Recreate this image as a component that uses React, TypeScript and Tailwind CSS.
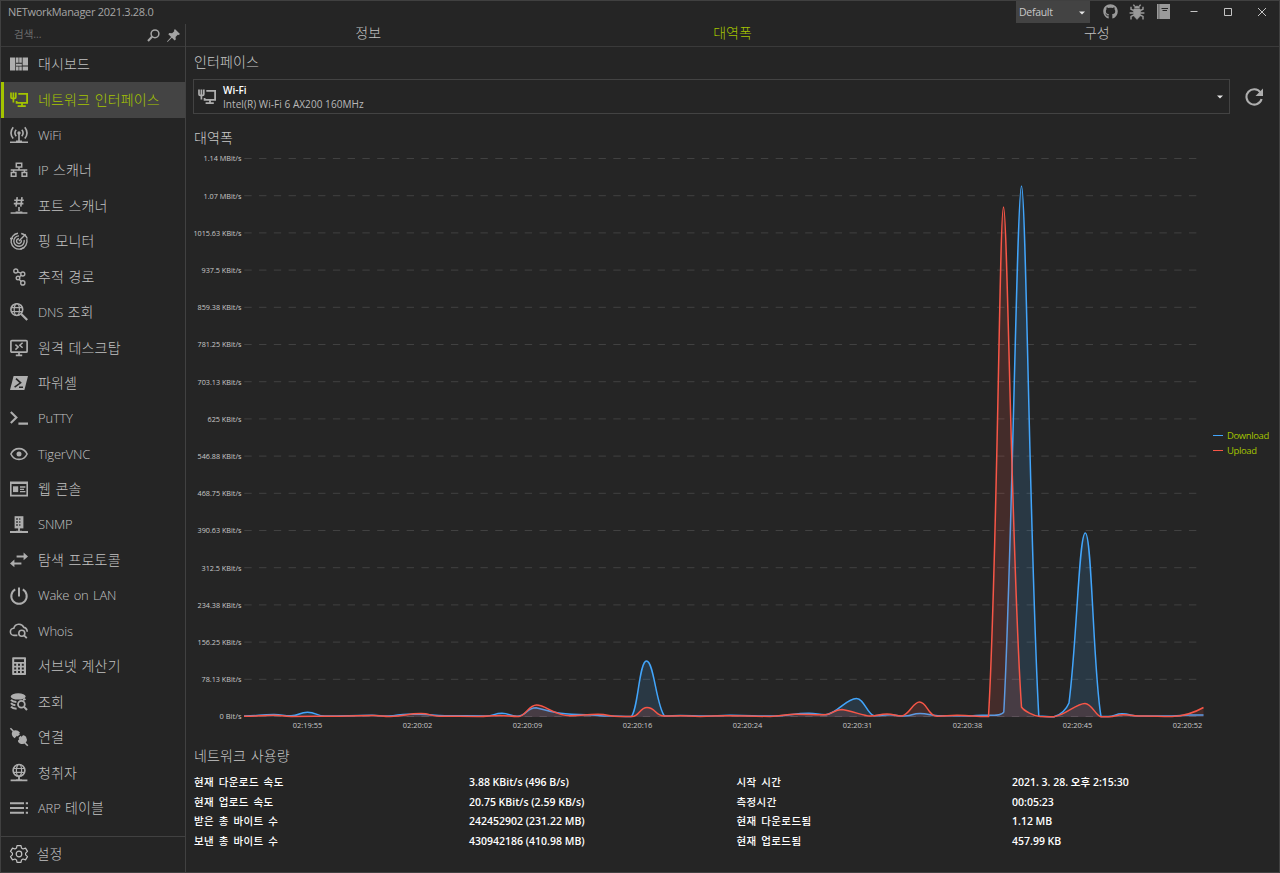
import type { ReactNode } from 'react';
import clsx from 'clsx';
import { FaGithub } from 'react-icons/fa';

const ICONS: Record<string, ReactNode> = {
  dashboard: (
    <g fill="currentColor" stroke="none">
      <path d="M0 2.5h5.3v13H0zM6 2.5h2.6v5.2H6zM9.2 2.5h2.6v5.2H9.2zM12.6 2.5H18v8h-5.4zM6 8.7h5.8v2H6zM6 11.5h2.6v4H6zM9.2 11.5h2.6v4H9.2zM12.6 11.5H18v4h-5.4z" />
    </g>
  ),
  network: (
    <>
      <path d="M8.3 2.9h8.8v8.9H6.6V10M12 12v2.6M7.6 15.2h8.2" strokeWidth="1.8" />
      <path d="M1 1.6v4.6q0 1.2 1.2 1.2h2.4q1.2 0 1.2-1.2V1.6M3.4 1.4v10" strokeWidth="1.7" />
    </>
  ),
  wifi: (
    <>
      <circle cx="9" cy="7" r="1.7" fill="currentColor" stroke="none" />
      <path d="M6.2 3.8q-2.6 3.1 0 6.4M11.8 3.8q2.6 3.1 0 6.4M3.2 1.2q-4.4 5.7 0 11.4M14.8 1.2q4.4 5.7 0 11.4M9 8v7M0 16.2h18M6 15.2h6" strokeWidth="1.6" />
    </>
  ),
  lan: (
    <path d="M6.3 2.3h5.4v3.6H6.3zM1.3 11.6h4.6v3.6H1.3zM12.1 11.6h4.6v3.6h-4.6zM9 6v3M0.7 9h16.6M3.6 9v2.6M14.4 9v2.6" strokeWidth="1.5" />
  ),
  port: (
    <path d="M7.2 0.2L6 9.6M12 0.2l-1.2 9.4M4.2 3.2h9.6M3.8 6.6h9.6M9 10v4M0.6 16h16.8M5.6 15.2h6.8" strokeWidth="1.6" />
  ),
  radar: (
    <>
      <path d="M8 1.2A8 8 0 1 0 16.8 7.2M9 3.9a5.2 5.2 0 1 0 5.1 4.1M9 6.7a2.4 2.4 0 1 0 2.2 1.6M9 9L15.6 2.2" strokeWidth="1.4" />
      <path d="M11.2 1.4Q16 2.6 17.2 6.6M0 6.5h3M10.5 17.3l4-2" strokeWidth="1.5" />
    </>
  ),
  route: (
    <>
      <circle cx="5.8" cy="3" r="2" />
      <circle cx="12.8" cy="6" r="2" />
      <circle cx="8" cy="10" r="1.8" />
      <circle cx="12.8" cy="14.9" r="2.1" />
      <path d="M7.6 3.8l3.4 1.4M11.4 7.3L9.4 8.9M9.2 11.4l2.2 2" />
    </>
  ),
  dns: (
    <>
      <circle cx="6.8" cy="6.6" r="5.9" strokeWidth="1.6" />
      <ellipse cx="6.8" cy="6.6" rx="2.6" ry="5.9" strokeWidth="1.2" />
      <path d="M1.6 4.6h10.4M1.6 8.6h10.4" strokeWidth="1.2" />
      <path d="M11.2 11l6 6" strokeWidth="2.2" />
    </>
  ),
  remote: (
    <>
      <rect x="0.9" y="1.6" width="16.2" height="11.6" rx="1" strokeWidth="1.7" />
      <path d="M9 13.5v2.8M5.8 16.3h6.4" strokeWidth="1.7" />
      <path d="M5.4 5.6l2.8 2.4-2.8 2.6M12.6 3.8L9.8 6.3l2.8 2.5" strokeWidth="1.5" />
    </>
  ),
  powershell: (
    <>
      <path d="M3.6 2H18l-3.6 14H0z" fill="currentColor" stroke="none" />
      <path d="M6 4.6l4.6 4.2-6 4.4M9 13.2h4" stroke="#252525" strokeWidth="1.6" />
    </>
  ),
  putty: <path d="M0.8 3l5.6 5.5L0.8 14M8.4 14.6H18" strokeWidth="2.1" />,
  eye: (
    <>
      <path d="M0.9 9Q3.4 3.6 9 3.6T17.1 9Q14.6 14.4 9 14.4T0.9 9z" strokeWidth="1.6" />
      <circle cx="9" cy="9" r="2.5" fill="currentColor" stroke="none" />
    </>
  ),
  console: (
    <>
      <path d="M0.8 2.4h16.4v13.2H0.8zM0.8 3.3h16.4" strokeWidth="1.6" />
      <path d="M3 6.3h5.2v5.8H3z" fill="currentColor" stroke="none" />
      <path d="M10 7h5.4M10 9.3h4M10 11.6h5.4" strokeWidth="1.3" />
    </>
  ),
  snmp: (
    <>
      <path d="M4.6 0.2h8.8v12.2H4.6z" fill="currentColor" stroke="none" />
      <path d="M6.2 3h1.6M9.2 3h1.2M6.2 6h1.6M9.2 6h1.2M6.2 9h1.6M9.2 9h1.2" stroke="#252525" strokeWidth="1.4" />
      <path d="M9 12v3M0 16h18M6 15.6h6" strokeWidth="1.8" />
    </>
  ),
  arrows: (
    <g fill="currentColor" stroke="none">
      <path d="M6.6 4.4h7V1.6L18 5.4l-4.4 3.8V6.4h-7zM11.4 11.4h-7V8.6L0 12.4l4.4 3.8v-2.8h7z" />
    </g>
  ),
  power: <path d="M9 0.4v9.2M5.2 2.4A7.7 7.7 0 1 0 12.8 2.4" strokeWidth="2" />,
  whois: (
    <>
      <path d="M7.4 13.4H4.2A3.6 3.6 0 0 1 3.8 6.2A5.3 5.3 0 0 1 13.8 5.4Q17.2 6 17.2 9.8" strokeWidth="1.6" />
      <circle cx="11.8" cy="11.2" r="3" strokeWidth="1.6" />
      <path d="M14 13.4l2.8 2.8" strokeWidth="1.8" />
    </>
  ),
  calc: (
    <>
      <rect x="2.2" y="0.2" width="13.8" height="17.8" rx="0.8" fill="currentColor" stroke="none" />
      <path d="M4.2 2.2h9.8v2.8H4.2zM4.2 6.8h2v2h-2zM8 6.8h2v2H8zM11.8 6.8h2v2h-2zM4.2 10.4h2v2h-2zM8 10.4h2v2H8zM11.8 10.4h2v2h-2zM4.2 14h2v2h-2zM8 14h2v2H8zM11.8 14h2v2h-2z" fill="#252525" stroke="none" />
    </>
  ),
  lookup: (
    <>
      <ellipse cx="8.2" cy="3.4" rx="7.4" ry="3.2" fill="currentColor" stroke="none" />
      <path d="M1 6.8q1.6 2 5.4 2.1M1 10.2q1.4 1.8 4.4 2.1M1 13.6q1.6 2 5.6 2.2M13 7q1.6-.4 2.4-1.2" strokeWidth="2" />
      <circle cx="11.4" cy="11.2" r="3.4" strokeWidth="1.8" />
      <path d="M13.8 13.6l3.2 3.4" strokeWidth="2" />
    </>
  ),
  plug: (
    <>
      <path d="M2.4 3.4Q6.4.6 10 4.6L4.6 10.2Q.4 7.2 2.4 3.4zM8 12.4l5-5.2q1.6-.4 3 1.6 1.8 2.8 0 5.6-2.6 2.6-6.2 1Q7.4 13.8 8 12.4z" fill="currentColor" stroke="none" />
      <path d="M0.4 0.2l3 3M15 15l2.8 2.8M7 7.8l2.4-2.2M9 10.6l2.2-2.2" strokeWidth="1.6" />
    </>
  ),
  listener: (
    <>
      <circle cx="9" cy="6.4" r="5.9" strokeWidth="1.6" />
      <ellipse cx="9" cy="6.4" rx="2.6" ry="5.9" strokeWidth="1.2" />
      <path d="M3.6 4.5h10.8M3.6 8.4h10.8" strokeWidth="1.2" />
      <path d="M9 12.4v3M0.6 16.3h16.8M6 16.2h6" strokeWidth="1.8" />
    </>
  ),
  arp: <path d="M0 4.2h14M0 9h14M0 13.8h14M15.8 4.2H18M15.8 9H18M15.8 13.8H18" strokeWidth="1.9" />,
  settings: (
    <>
      <path d="M7 .6h4l.5 2.5 1.5.9 2.5-.9 2 3.3-1.9 1.7v1.8l1.9 1.7-2 3.3-2.5-.9-1.5.9-.5 2.5H7l-.5-2.5-1.5-.9-2.5.9-2-3.3 1.9-1.7V8.1L.5 6.4l2-3.3 2.5.9 1.5-.9z" strokeWidth="1.2" strokeLinejoin="round" />
      <circle cx="9" cy="9" r="2.8" strokeWidth="1.2" />
    </>
  ),
};

function Icon({ name, className }: { name: string; className?: string }) {
  return (
    <svg viewBox="0 0 18 18" className={clsx('h-[18px] w-[18px] shrink-0 overflow-visible', className)} fill="none" stroke="currentColor" strokeWidth="1.4" aria-hidden>
      {ICONS[name]}
    </svg>
  );
}

const NAV = [
  { icon: 'dashboard', label: '대시보드' },
  { icon: 'network', label: '네트워크 인터페이스' },
  { icon: 'wifi', label: 'WiFi' },
  { icon: 'lan', label: 'IP 스캐너' },
  { icon: 'port', label: '포트 스캐너' },
  { icon: 'radar', label: '핑 모니터' },
  { icon: 'route', label: '추적 경로' },
  { icon: 'dns', label: 'DNS 조회' },
  { icon: 'remote', label: '원격 데스크탑' },
  { icon: 'powershell', label: '파워셸' },
  { icon: 'putty', label: 'PuTTY' },
  { icon: 'eye', label: 'TigerVNC' },
  { icon: 'console', label: '웹 콘솔' },
  { icon: 'snmp', label: 'SNMP' },
  { icon: 'arrows', label: '탐색 프로토콜' },
  { icon: 'power', label: 'Wake on LAN' },
  { icon: 'whois', label: 'Whois' },
  { icon: 'calc', label: '서브넷 계산기' },
  { icon: 'lookup', label: '조회' },
  { icon: 'plug', label: '연결' },
  { icon: 'listener', label: '청취자' },
  { icon: 'arp', label: 'ARP 테이블' },
];

const HANGUL = /[가-힣]/;

// Hangul is set a little larger than Latin, word by word
function Label({ text, className }: { text: string; className?: string }) {
  return (
    <span className={clsx('flex items-baseline gap-[4.5px] whitespace-nowrap', className)}>
      {text.split(' ').map((word) => (
        <span key={word} className={HANGUL.test(word) ? 'text-[14px] tracking-[0.15px]' : 'text-[13px] tracking-[-0.2px]'}>
          {word}
        </span>
      ))}
    </span>
  );
}

const Y_LABELS: [string, number][] = [
  ['1.14 MBit/s', 38], ['1.07 MBit/s', 38], ['1015.63 KBit/s', 48], ['937.5 KBit/s', 40],
  ['859.38 KBit/s', 44], ['781.25 KBit/s', 44], ['703.13 KBit/s', 44], ['625 KBit/s', 34],
  ['546.88 KBit/s', 44], ['468.75 KBit/s', 44], ['390.63 KBit/s', 44], ['312.5 KBit/s', 40],
  ['234.38 KBit/s', 44], ['156.25 KBit/s', 44], ['78.13 KBit/s', 40], ['0 Bit/s', 22],
];

const X_LABELS = ['02:19:55', '02:20:02', '02:20:09', '02:20:16', '02:20:24', '02:20:31', '02:20:38', '02:20:45', '02:20:52'];

// [x, y] eases to the next point, [c1x, c1y, c2x, c2y, x, y] is an explicit curve
const DOWNLOAD = [
  [244, 716], [274, 714.5], [291, 715.8], [307.5, 712.2], [325, 716], [372, 715.3], [388, 716], [408, 714.2], [420, 714.3],
  [445, 715.7], [486, 716], [502, 713.3], [517, 716.3], [536, 707.8], [554, 712, 556, 714.3, 586, 714.8], [610, 716], [631, 716.6],
  [638, 712, 639, 661, 646.5, 661], [654, 661, 656, 705, 664.5, 716], [680, 715.5], [705, 716], [730, 715.3], [775, 716],
  [809, 713.2], [826, 714.8], [838, 713, 846, 698.5, 856.5, 698.5], [864, 698.5, 867, 714, 874, 715.8], [890, 714.8], [904, 716],
  [920, 713.5], [938, 715.7], [970, 716], [982, 715.2], [992, 715.5, 1002, 716, 1003.8, 712], [1012, 560, 1017, 186, 1021.5, 186],
  [1026, 186, 1030, 560, 1038.8, 716], [1054, 716.8], [1060, 715, 1066, 710, 1069, 703], [1077, 640, 1079, 533, 1085.3, 533],
  [1092, 533, 1093, 670, 1101, 716.5], [1108, 716.6], [1122, 713.8], [1139, 716], [1172, 716], [1190, 715], [1203.5, 715],
];

const UPLOAD = [
  [244, 716.3], [274, 715.3], [291, 716.4], [340, 716.3], [374, 715.4], [390, 716.4], [421, 713.5], [440, 716.2], [478, 716.4],
  [500, 715.4], [519, 716.4], [525, 716, 529, 705, 536.5, 705], [546, 705, 554, 715.5, 570, 715.7], [598, 714.3], [620, 716.5],
  [632, 716.5], [647, 707.5], [664, 716], [680, 715.8], [700, 716.4], [726, 715.8], [770, 716.4], [796, 714.2], [824, 714.8],
  [842, 709.6], [852, 711, 864, 716, 870, 716], [887, 714], [902, 716], [910, 714, 913, 702, 919.5, 702],
  [927, 702, 928, 716, 937, 716.2], [957, 715.3], [988.5, 716.5], [997.5, 560, 999.5, 207, 1003.5, 207],
  [1007.5, 207, 1011.5, 560, 1021.5, 707], [1024, 711, 1034, 716, 1040, 716.6], [1054, 716.8],
  [1066, 715, 1076, 703.5, 1085, 703.5], [1092, 703.5, 1096, 716.5, 1101, 716.7], [1109, 716.7], [1123, 714.8], [1143, 716],
  [1172, 716.4], [1182, 716.2, 1192, 714, 1203.5, 707.5],
];

function toPath(points: number[][]) {
  let [px, py] = points[0];
  let d = `M${px} ${py}`;
  points.slice(1).forEach((p) => {
    const [x, y] = p.slice(-2);
    const mid = (px + x) / 2;
    d += p.length === 6 ? `C${p.join(' ')}` : `C${mid} ${py} ${mid} ${y} ${x} ${y}`;
    px = x;
    py = y;
  });
  return d;
}

function Series({ points, color }: { points: number[][]; color: string }) {
  const d = toPath(points);
  return (
    <>
      <path d={`${d}V717H244Z`} fill={color} fillOpacity="0.15" />
      <path d={d} fill="none" stroke={color} strokeWidth="1.5" />
    </>
  );
}

function Chart() {
  return (
    <svg viewBox="186 148 1024 586" className="h-[586px] w-[1024px] shrink-0" fontFamily="'Open Sans', sans-serif" fontSize="7.6">
      {Y_LABELS.map(([label, width], i) => (
        <g key={label}>
          <line x1="244.3" x2="1197" y1={158.5 + i * 37.2} y2={158.5 + i * 37.2} stroke="#414141" strokeDasharray="7.38 7.38" />
          <text x="241.5" y={161.4 + i * 37.2} textAnchor="end" textLength={width} lengthAdjust="spacingAndGlyphs" fill="#c8c8c8">{label}</text>
        </g>
      ))}
      <Series points={DOWNLOAD} color="#42a5fb" />
      <Series points={UPLOAD} color="#f75647" />
      {X_LABELS.map((label, i) => (
        <text key={label} x={307.5 + i * 110} y="727.8" textAnchor="middle" textLength="29.5" lengthAdjust="spacingAndGlyphs" fill="#c8c8c8">{label}</text>
      ))}
    </svg>
  );
}

const STATS = [
  ['현재 다운로드 속도', '3.88 KBit/s (496 B/s)', '시작 시간', '2021. 3. 28. 오후 2:15:30'],
  ['현재 업로드 속도', '20.75 KBit/s (2.59 KB/s)', '측정시간', '00:05:23'],
  ['받은 총 바이트 수', '242452902 (231.22 MB)', '현재 다운로드됨', '1.12 MB'],
  ['보낸 총 바이트 수', '430942186 (410.98 MB)', '현재 업로드됨', '457.99 KB'],
];

function Sidebar() {
  return (
    <aside className="flex w-[185px] shrink-0 flex-col border-r border-[#414141]">
      <div className="flex h-[23px] items-center border-b border-[#3a3a3a] pl-[13px] pr-[5px] text-[#a4a4a4]">
        <span className="flex-1 text-[10.5px] text-[#6c6c6c]">검색...</span>
        <svg viewBox="0 0 13 13" className="mr-[7px] size-[13px]" fill="none" stroke="currentColor">
          <circle cx="8" cy="4.8" r="3.9" strokeWidth="1.5" />
          <path d="M5.2 7.6L1 11.9" strokeWidth="2.1" />
        </svg>
        <svg viewBox="0 0 12 12" className="size-[13px]" fill="currentColor">
          <path d="M7.3 0L12 4.7l-1.2.8-.9-.2-2 2 .2 2.5-1 .9L4.5 8.1.5 12l-.5-.4L3.8 7.4 1.2 4.8l1-1 2.5.2 2-2-.2-.9z" />
        </svg>
      </div>
      <nav className="flex flex-1 flex-col">
        {NAV.map((item, i) => (
          <div
            key={item.label}
            className={clsx(
              'flex h-[35.43px] items-center gap-[10px] border-l-[3px] pb-px pl-[6px] font-light',
              i === 1 ? 'border-[#a4c400] bg-[#444444] text-[#a4c400]' : 'border-transparent text-[#c2c2c2]',
            )}
          >
            <Icon name={item.icon} className={i === 1 ? 'text-[#a4c400]' : 'text-[#aeaeae]'} />
            <Label text={item.label} className={HANGUL.test(item.label) ? 'pb-px' : 'pt-px'} />
          </div>
        ))}
      </nav>
      <div className="flex h-[36px] items-center gap-[9px] border-t border-[#414141] pb-px pl-[8.5px] font-light text-[#c2c2c2]">
        <Icon name="settings" />
        <Label text="설정" className="pb-px" />
      </div>
    </aside>
  );
}

function TitleBar() {
  return (
    <header className="flex h-[23px] shrink-0 items-center text-[#9a9a9a]">
      <h1 className="flex-1 pl-[7px] text-[11px] tracking-[-0.3px] text-[#a6a6a6]">NETworkManager 2021.3.28.0</h1>
      <div className="mr-[13px] flex h-[22px] w-[74px] items-center justify-between self-start bg-[#434343] pl-[3px] pr-[5px] pt-px text-[10.5px] tracking-[-0.3px] text-[#c8c8c8]">
        Default
        <Caret />
      </div>
      <FaGithub className="mr-[11px] size-[15px] -translate-y-px" />
      <svg viewBox="0 0 16 16" className="mr-[12px] size-4 -translate-y-px" fill="none" stroke="currentColor">
        <path d="M4.8 5h6.4l.6 3.5-1 4L8 15.5l-2.8-3-1-4zM5.4 4.2Q5.4 2 8 2t2.6 2.2z" fill="currentColor" strokeWidth=".5" />
        <path d="M5.8 2.5L4.4.6M10.2 2.5L11.6.6M4.8 6.6L2 5.2V2.8M11.2 6.6L14 5.2V2.8M4.4 9H.6M11.6 9h3.8M5 11l-3 1.4v3M11 11l3 1.4v3" strokeWidth="1.4" />
      </svg>
      <svg viewBox="0 0 13 15" className="mr-[20px] h-[15px] w-[13px] -translate-y-px" fill="currentColor">
        <path d="M0 0h1.7v15H0zM2.2 0H13v15H2.2z" />
        <path d="M4.5 4.5H11M5.5 6.5H10" stroke="#252525" />
      </svg>
      <svg viewBox="0 0 78 10" className="mr-[11px] h-[10px] w-[78px] -translate-y-[2px]" fill="none" stroke="#c4c4c4">
        <path d="M0.5 5.5h7M34.5 2.5h7v7h-7zM68 2l8 8M76 2l-8 8" />
      </svg>
    </header>
  );
}

function Caret() {
  return (
    <svg viewBox="0 0 6 4" className="h-1 w-[6px] shrink-0" fill="#e6e6e6">
      <path d="M0 .4h6L3 3.6z" />
    </svg>
  );
}

function Heading({ children, className }: { children: string; className?: string }) {
  return (
    <h2 className={clsx('flex pl-[8px] font-light leading-5 text-[#c8c8c8]', className)}>
      <Label text={children} />
    </h2>
  );
}

export default function App() {
  return (
    <div className="flex h-[873px] w-[1280px] flex-col overflow-hidden border border-[#404040] bg-[#252525] font-['Open_Sans','Noto_Sans_CJK_KR',sans-serif] text-[#b9b9b9]">
      <TitleBar />
      <div className="flex min-h-0 flex-1">
        <Sidebar />
        <main className="flex flex-1 flex-col">
          <div className="grid h-[23px] shrink-0 grid-cols-3 items-center border-b border-[#3a3a3a] pb-[5px] text-center text-[14px] font-light leading-[17px] text-[#c2c2c2]">
            <span>정보</span>
            <span className="text-[#a4c400]">대역폭</span>
            <span>구성</span>
          </div>
          <Heading className="mt-[5px]">인터페이스</Heading>
          <div className="mt-[7px] flex items-center pl-[7px]">
            <div className="flex h-[35px] w-[1037px] items-center border border-[#434343] pl-[4px] pr-[6px]">
              <Icon name="network" className="mr-[7px] text-[#aeaeae]" />
              <div className="flex-1 text-[10px] leading-[14px]">
                <div className="font-semibold text-white">Wi-Fi</div>
                <div className="tracking-[0.06px]">Intel(R) Wi-Fi 6 AX200 160MHz</div>
              </div>
              <Caret />
            </div>
            <svg viewBox="0 0 18 18" className="ml-[15px] size-[18px]" fill="none" stroke="#aeaeae">
              <path d="M15.5 4.5A7.7 7.7 0 1 0 16.6 11" strokeWidth="2.1" />
              <path d="M18 .5V8h-7.5z" fill="#aeaeae" stroke="none" />
            </svg>
          </div>
          <Heading className="mt-[14px]">대역폭</Heading>
          <div className="flex">
            <Chart />
            <div className="flex flex-col justify-center pl-[3px] pt-[4px] text-[9.5px] leading-[15px] tracking-[-0.4px] text-[#a4c400]">
              <div className="flex items-center gap-[4px]">
                <i className="h-px w-[10px] bg-[#42a5fb]" />
                Download
              </div>
              <div className="flex items-center gap-[4px]">
                <i className="h-px w-[10px] bg-[#f75647]" />
                Upload
              </div>
            </div>
          </div>
          <Heading className="mt-[12px]">네트워크 사용량</Heading>
          <div className="mt-[7px] grid grid-cols-[275px_267.5px_275.5px_1fr] pl-[8px] text-[10.5px] leading-[19.5px] text-white">
            {STATS.flat().map((text, i) => (
              <span key={i} className={i % 2 ? 'font-semibold' : 'font-medium tracking-[0.4px] [word-spacing:1.5px]'}>{text}</span>
            ))}
          </div>
        </main>
      </div>
    </div>
  );
}
